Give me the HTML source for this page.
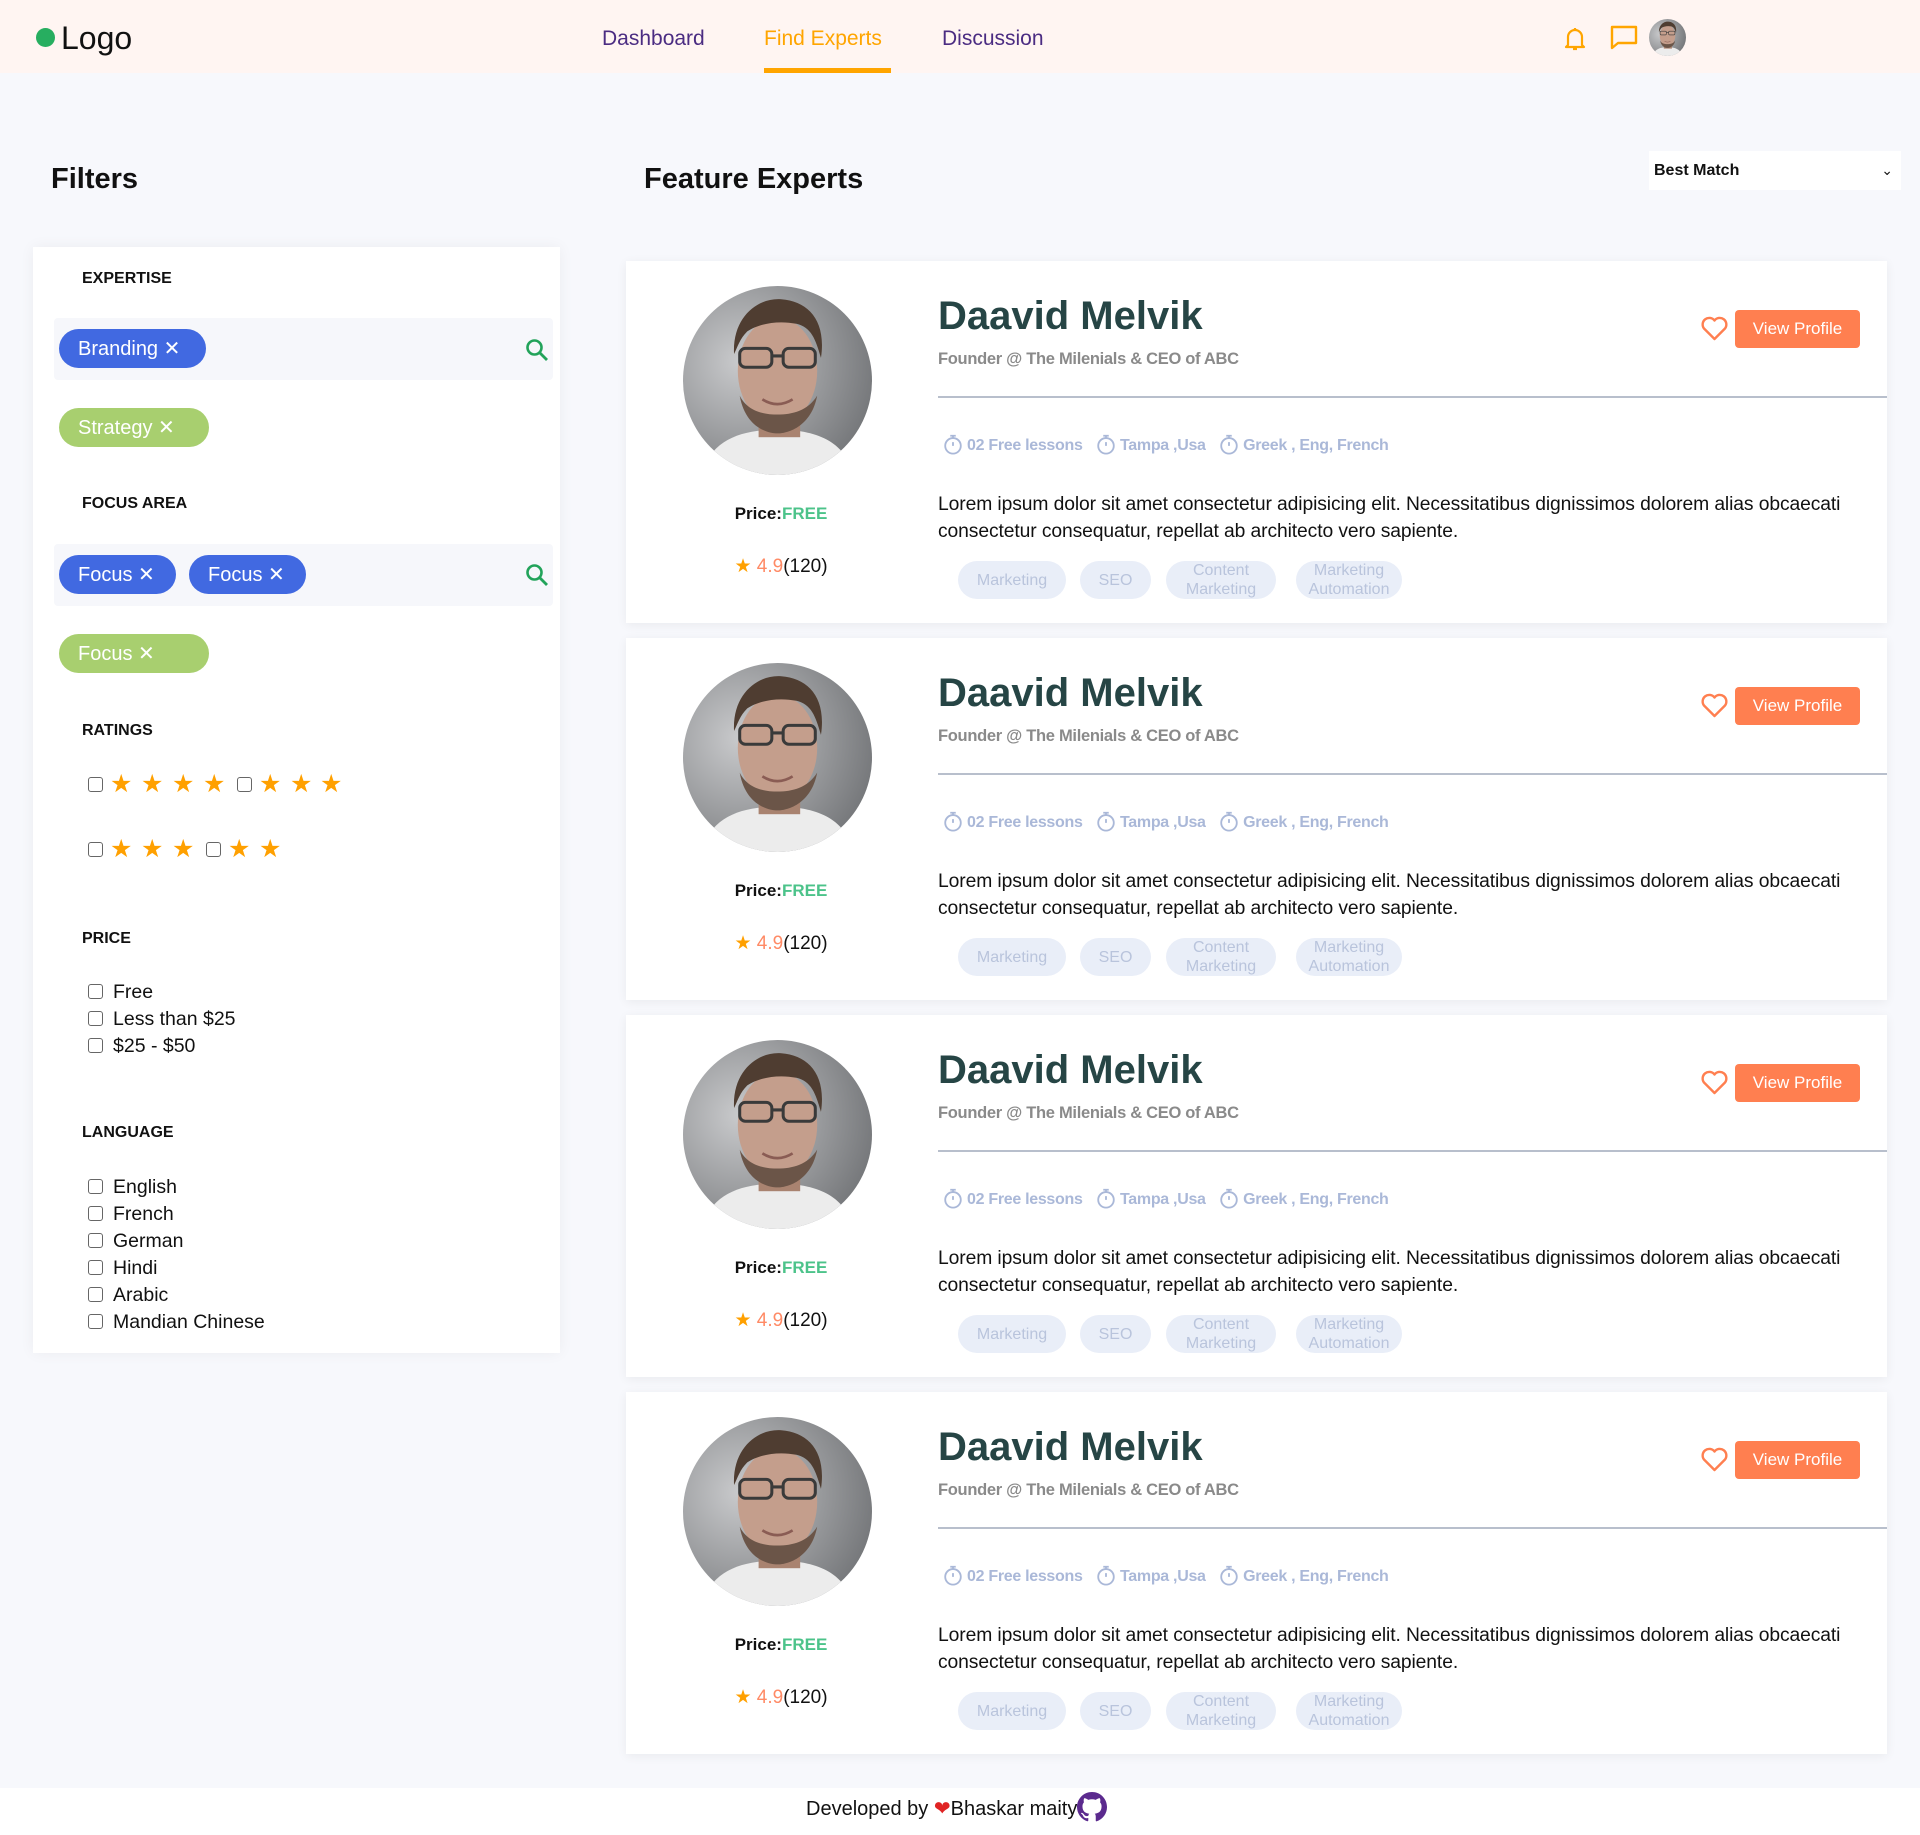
<!DOCTYPE html>
<html><head><meta charset="utf-8">
<style>
*{box-sizing:border-box;margin:0;padding:0}
body{width:1920px;height:1835px;background:#f7f8fc;font-family:"Liberation Sans",sans-serif;position:relative;overflow:hidden;color:#111}
.a{position:absolute}
.hdr{left:0;top:0;width:1920px;height:73px;background:#fff5f2}
.nav{font-size:21px;top:27px}
.h1{font-size:29px;font-weight:bold;top:163px}
.panel{left:33px;top:247px;width:527px;height:1106px;background:#fff;box-shadow:0 0 14px rgba(0,0,0,.05)}
.lbl{font-size:16px;font-weight:bold;left:82px}
.bar{left:54px;width:499px;height:62px;background:#f6f7fb;border-radius:4px}
.chip{height:39px;border-radius:20px;color:#fff;font-size:20px;line-height:41px;padding-left:19px}
.blue{background:#4169e1}.green{background:#a8cf6f}
.cb{width:15px;height:15px;border:1.5px solid #666;border-radius:3px;background:#fff}
.st{color:#ffa000;font-size:25px;line-height:25px}
.opt{font-size:19.5px;left:113px}
.card{left:626px;width:1261px;height:362px;background:#fff;box-shadow:0 2px 10px rgba(0,0,0,.06)}
.name{left:312px;top:33px;font-size:40px;font-weight:bold;color:#264545}
.sub{left:312px;top:89px;font-size:16.5px;font-weight:bold;color:#8a8a8a;letter-spacing:-.3px}
.hr{left:312px;top:135px;width:949px;height:2px;background:#b8bfcc}
.info{left:316px;top:172px;font-size:16px;font-weight:bold;color:#aab8d8;white-space:nowrap;letter-spacing:-.3px}
.desc{left:312px;top:230px;width:949px;font-size:19.3px;line-height:27px;color:#111;letter-spacing:-.1px}
.tag{top:300px;height:38px;border-radius:19px;background:#e9eef8;color:#b9c4dc;font-size:16px;text-align:center;display:flex;align-items:center;justify-content:center;line-height:19px}
.btn{left:1109px;top:49px;width:125px;height:38px;background:#ff7f50;border-radius:4px;color:#fff;font-size:17px;text-align:center;line-height:38px}
.price{left:90px;top:243px;width:130px;text-align:center;font-size:17px;font-weight:bold}
.rate{left:90px;top:294px;width:130px;text-align:center;font-size:19px}
.clock{display:inline-block;width:22px;height:22px;vertical-align:-5px;margin-right:3px}
</style></head><body>
<svg width="0" height="0" style="position:absolute">
<defs>
<clipPath id="cc"><circle cx="50" cy="50" r="50"/></clipPath>
<radialGradient id="bg" cx="30%" cy="40%" r="80%"><stop offset="0" stop-color="#c9cacc"/><stop offset="1" stop-color="#6e7073"/></radialGradient>
<symbol id="face" viewBox="0 0 100 100">
<g clip-path="url(#cc)">
<rect width="100" height="100" fill="url(#bg)"/>
<path d="M10 100 C14 82 30 76 50 76 C70 76 86 82 90 100Z" fill="#ececec"/>
<rect x="40" y="60" width="22" height="20" fill="#a98370"/>
<ellipse cx="50" cy="45" rx="21" ry="28" fill="#c49e8c"/>
<path d="M30 58 C33 75 45 78 50 78 C56 78 68 74 71 58 C66 66 58 68 50 68 C42 68 34 66 30 58Z" fill="#6b5548"/>
<path d="M27 36 C26 16 40 6 52 7 C66 8 76 18 73 38 C70 28 68 22 60 20 C50 18 40 20 34 24 C30 28 29 32 27 36Z" fill="#4f3d31"/>
<rect x="30" y="33" width="17" height="10" rx="3" fill="none" stroke="#3a3a3a" stroke-width="1.6"/>
<rect x="53" y="33" width="17" height="10" rx="3" fill="none" stroke="#3a3a3a" stroke-width="1.6"/>
<path d="M47 37 H53" stroke="#3a3a3a" stroke-width="1.6"/>
<path d="M42 60 Q50 65 58 60" stroke="#8a5c54" stroke-width="1.4" fill="none"/>
</g>
</symbol>
<symbol id="clk" viewBox="0 0 24 24"><circle cx="12" cy="14" r="8.5" fill="none" stroke="#aab8d8" stroke-width="2"/><path d="M9 3h6M12 3v2.5M12 10v4" stroke="#aab8d8" stroke-width="2" fill="none"/></symbol>
</defs></svg>

<div class="a hdr"></div>
<div class="a" style="left:36px;top:28px;width:19px;height:19px;border-radius:50%;background:#27ae60"></div>
<div class="a" style="left:61px;top:20px;font-size:32px;color:#111">Logo</div>
<div class="a nav" style="left:602px;color:#4b2c82">Dashboard</div>
<div class="a nav" style="left:764px;color:#ffa500">Find Experts</div>
<div class="a" style="left:764px;top:68px;width:127px;height:5px;background:#ffa500"></div>
<div class="a nav" style="left:942px;color:#4b2c82">Discussion</div>
<svg class="a" style="left:1563px;top:26px" width="24" height="26" viewBox="0 0 24 26"><path d="M5 19V11a7 7 0 0 1 14 0v8l2 2H3z" fill="none" stroke="#ffa500" stroke-width="2.2" stroke-linejoin="round"/><path d="M10 23h4" stroke="#ffa500" stroke-width="2.2"/><path d="M12 2v2" stroke="#ffa500" stroke-width="2.2"/></svg>
<svg class="a" style="left:1610px;top:25px" width="28" height="25" viewBox="0 0 28 25"><path d="M2 2h24v16H8l-6 5z" fill="none" stroke="#ffa500" stroke-width="2.4" stroke-linejoin="round"/></svg>
<svg class="a" style="left:1649px;top:19px" width="37" height="37"><use href="#face"/></svg>

<div class="a h1" style="left:51px">Filters</div>
<div class="a h1" style="left:644px">Feature Experts</div>
<div class="a" style="left:1649px;top:151px;width:252px;height:39px;background:#fff;font-size:16px;font-weight:bold;line-height:39px;padding-left:5px">Best Match<span style="position:absolute;right:8px;font-weight:normal;font-size:14px">&#8964;</span></div>

<div class="a panel"></div>
<div class="a lbl" style="top:270px">EXPERTISE</div>
<div class="a bar" style="top:318px"></div>
<div class="a chip blue" style="left:59px;top:329px;width:147px">Branding ✕</div>
<svg class="a" style="left:525px;top:338px" width="24" height="24" viewBox="0 0 24 24"><circle cx="9.5" cy="9.5" r="7" fill="none" stroke="#22a35a" stroke-width="2.6"/><path d="M14.5 14.5L22 22" stroke="#22a35a" stroke-width="2.8"/></svg>
<div class="a chip green" style="left:59px;top:408px;width:150px">Strategy ✕</div>
<div class="a lbl" style="top:495px">FOCUS AREA</div>
<div class="a bar" style="top:544px"></div>
<div class="a chip blue" style="left:59px;top:555px;width:117px">Focus ✕</div>
<div class="a chip blue" style="left:189px;top:555px;width:117px">Focus ✕</div>
<svg class="a" style="left:525px;top:563px" width="24" height="24" viewBox="0 0 24 24"><circle cx="9.5" cy="9.5" r="7" fill="none" stroke="#22a35a" stroke-width="2.6"/><path d="M14.5 14.5L22 22" stroke="#22a35a" stroke-width="2.8"/></svg>
<div class="a chip green" style="left:59px;top:634px;width:150px">Focus ✕</div>
<div class="a lbl" style="top:722px">RATINGS</div>
<div class="a cb" style="left:88px;top:777px"></div>
<div class="a st" style="left:110px;top:772px">★</div><div class="a st" style="left:141px;top:772px">★</div><div class="a st" style="left:172px;top:772px">★</div><div class="a st" style="left:203px;top:772px">★</div>
<div class="a cb" style="left:237px;top:777px"></div>
<div class="a st" style="left:259px;top:772px">★</div><div class="a st" style="left:290px;top:772px">★</div><div class="a st" style="left:320px;top:772px">★</div>
<div class="a cb" style="left:88px;top:842px"></div>
<div class="a st" style="left:110px;top:837px">★</div><div class="a st" style="left:141px;top:837px">★</div><div class="a st" style="left:172px;top:837px">★</div>
<div class="a cb" style="left:206px;top:842px"></div>
<div class="a st" style="left:228px;top:837px">★</div><div class="a st" style="left:259px;top:837px">★</div>
<div class="a lbl" style="top:930px">PRICE</div>
<div class="a cb" style="left:88px;top:984px"></div><div class="a opt" style="top:981px">Free</div>
<div class="a cb" style="left:88px;top:1011px"></div><div class="a opt" style="top:1008px">Less than $25</div>
<div class="a cb" style="left:88px;top:1038px"></div><div class="a opt" style="top:1035px">$25 - $50</div>
<div class="a lbl" style="top:1124px">LANGUAGE</div>
<div class="a cb" style="left:88px;top:1179px"></div><div class="a opt" style="top:1176px">English</div>
<div class="a cb" style="left:88px;top:1206px"></div><div class="a opt" style="top:1203px">French</div>
<div class="a cb" style="left:88px;top:1233px"></div><div class="a opt" style="top:1230px">German</div>
<div class="a cb" style="left:88px;top:1260px"></div><div class="a opt" style="top:1257px">Hindi</div>
<div class="a cb" style="left:88px;top:1287px"></div><div class="a opt" style="top:1284px">Arabic</div>
<div class="a cb" style="left:88px;top:1314px"></div><div class="a opt" style="top:1311px">Mandian Chinese</div>

<div class="a card" style="top:261px">
<svg class="a" style="left:57px;top:25px" width="189" height="189"><use href="#face"/></svg>
<div class="a price">Price:<span style="color:#4cc38a">FREE</span></div>
<div class="a rate"><span style="color:#ffa000">★</span> <span style="color:#ff8a65">4.9</span>(120)</div>
<div class="a name">Daavid Melvik</div>
<div class="a sub">Founder @ The Milenials &amp; CEO of ABC</div>
<svg class="a" style="left:1075px;top:55px" width="27" height="25" viewBox="0 0 27 25"><path d="M13.5 23L3 12.5A6 6 0 0 1 13.5 4.5A6 6 0 0 1 24 12.5z" fill="none" stroke="#ff7f50" stroke-width="2.4" stroke-linejoin="round"/></svg>
<div class="a btn">View Profile</div>
<div class="a hr"></div>
<div class="a info"><svg class="clock"><use href="#clk"/></svg>02 Free lessons &nbsp;&nbsp;<svg class="clock"><use href="#clk"/></svg>Tampa ,Usa &nbsp;&nbsp;<svg class="clock"><use href="#clk"/></svg>Greek , Eng, French</div>
<div class="a desc">Lorem ipsum dolor sit amet consectetur adipisicing elit. Necessitatibus dignissimos dolorem alias obcaecati consectetur consequatur, repellat ab architecto vero sapiente.</div>
<div class="a tag" style="left:332px;width:108px">Marketing</div>
<div class="a tag" style="left:454px;width:71px">SEO</div>
<div class="a tag" style="left:540px;width:110px">Content<br>Marketing</div>
<div class="a tag" style="left:670px;width:106px">Marketing<br>Automation</div>
</div>
<div class="a card" style="top:638px">
<svg class="a" style="left:57px;top:25px" width="189" height="189"><use href="#face"/></svg>
<div class="a price">Price:<span style="color:#4cc38a">FREE</span></div>
<div class="a rate"><span style="color:#ffa000">★</span> <span style="color:#ff8a65">4.9</span>(120)</div>
<div class="a name">Daavid Melvik</div>
<div class="a sub">Founder @ The Milenials &amp; CEO of ABC</div>
<svg class="a" style="left:1075px;top:55px" width="27" height="25" viewBox="0 0 27 25"><path d="M13.5 23L3 12.5A6 6 0 0 1 13.5 4.5A6 6 0 0 1 24 12.5z" fill="none" stroke="#ff7f50" stroke-width="2.4" stroke-linejoin="round"/></svg>
<div class="a btn">View Profile</div>
<div class="a hr"></div>
<div class="a info"><svg class="clock"><use href="#clk"/></svg>02 Free lessons &nbsp;&nbsp;<svg class="clock"><use href="#clk"/></svg>Tampa ,Usa &nbsp;&nbsp;<svg class="clock"><use href="#clk"/></svg>Greek , Eng, French</div>
<div class="a desc">Lorem ipsum dolor sit amet consectetur adipisicing elit. Necessitatibus dignissimos dolorem alias obcaecati consectetur consequatur, repellat ab architecto vero sapiente.</div>
<div class="a tag" style="left:332px;width:108px">Marketing</div>
<div class="a tag" style="left:454px;width:71px">SEO</div>
<div class="a tag" style="left:540px;width:110px">Content<br>Marketing</div>
<div class="a tag" style="left:670px;width:106px">Marketing<br>Automation</div>
</div>
<div class="a card" style="top:1015px">
<svg class="a" style="left:57px;top:25px" width="189" height="189"><use href="#face"/></svg>
<div class="a price">Price:<span style="color:#4cc38a">FREE</span></div>
<div class="a rate"><span style="color:#ffa000">★</span> <span style="color:#ff8a65">4.9</span>(120)</div>
<div class="a name">Daavid Melvik</div>
<div class="a sub">Founder @ The Milenials &amp; CEO of ABC</div>
<svg class="a" style="left:1075px;top:55px" width="27" height="25" viewBox="0 0 27 25"><path d="M13.5 23L3 12.5A6 6 0 0 1 13.5 4.5A6 6 0 0 1 24 12.5z" fill="none" stroke="#ff7f50" stroke-width="2.4" stroke-linejoin="round"/></svg>
<div class="a btn">View Profile</div>
<div class="a hr"></div>
<div class="a info"><svg class="clock"><use href="#clk"/></svg>02 Free lessons &nbsp;&nbsp;<svg class="clock"><use href="#clk"/></svg>Tampa ,Usa &nbsp;&nbsp;<svg class="clock"><use href="#clk"/></svg>Greek , Eng, French</div>
<div class="a desc">Lorem ipsum dolor sit amet consectetur adipisicing elit. Necessitatibus dignissimos dolorem alias obcaecati consectetur consequatur, repellat ab architecto vero sapiente.</div>
<div class="a tag" style="left:332px;width:108px">Marketing</div>
<div class="a tag" style="left:454px;width:71px">SEO</div>
<div class="a tag" style="left:540px;width:110px">Content<br>Marketing</div>
<div class="a tag" style="left:670px;width:106px">Marketing<br>Automation</div>
</div>
<div class="a card" style="top:1392px">
<svg class="a" style="left:57px;top:25px" width="189" height="189"><use href="#face"/></svg>
<div class="a price">Price:<span style="color:#4cc38a">FREE</span></div>
<div class="a rate"><span style="color:#ffa000">★</span> <span style="color:#ff8a65">4.9</span>(120)</div>
<div class="a name">Daavid Melvik</div>
<div class="a sub">Founder @ The Milenials &amp; CEO of ABC</div>
<svg class="a" style="left:1075px;top:55px" width="27" height="25" viewBox="0 0 27 25"><path d="M13.5 23L3 12.5A6 6 0 0 1 13.5 4.5A6 6 0 0 1 24 12.5z" fill="none" stroke="#ff7f50" stroke-width="2.4" stroke-linejoin="round"/></svg>
<div class="a btn">View Profile</div>
<div class="a hr"></div>
<div class="a info"><svg class="clock"><use href="#clk"/></svg>02 Free lessons &nbsp;&nbsp;<svg class="clock"><use href="#clk"/></svg>Tampa ,Usa &nbsp;&nbsp;<svg class="clock"><use href="#clk"/></svg>Greek , Eng, French</div>
<div class="a desc">Lorem ipsum dolor sit amet consectetur adipisicing elit. Necessitatibus dignissimos dolorem alias obcaecati consectetur consequatur, repellat ab architecto vero sapiente.</div>
<div class="a tag" style="left:332px;width:108px">Marketing</div>
<div class="a tag" style="left:454px;width:71px">SEO</div>
<div class="a tag" style="left:540px;width:110px">Content<br>Marketing</div>
<div class="a tag" style="left:670px;width:106px">Marketing<br>Automation</div>
</div>

<div class="a" style="left:0;top:1788px;width:1920px;height:47px;background:#fff"></div>
<div class="a" style="left:806px;top:1792px;font-size:20px;color:#111;white-space:nowrap">Developed by <span style="color:#e02424">&#10084;</span>Bhaskar maity<svg width="30" height="30" viewBox="0 0 16 16" style="vertical-align:-7px"><path fill="#5b2a8e" d="M8 0C3.58 0 0 3.58 0 8c0 3.540 2.29 6.53 5.47 7.59.4.07.55-.17.55-.38v-1.33c-2.23.48-2.7-1.070-2.7-1.070-.36-.92-.89-1.17-.89-1.17-.73-.5.06-.49.06-.49.8.06 1.23.83 1.23.83.72 1.22 1.87.87 2.33.66.07-.52.28-.87.5-1.07-1.78-.2-3.64-.89-3.64-3.95 0-.87.31-1.59.82-2.15-.08-.2-.36-1.02.08-2.12 0 0 .67-.21 2.2.82a7.6 7.6 0 0 1 4 0c1.53-1.04 2.2-.82 2.2-.82.44 1.1.16 1.92.08 2.12.51.56.82 1.27.82 2.15 0 3.07-1.87 3.75-3.65 3.95.29.25.54.73.54 1.48v2.2c0 .21.15.46.55.38A8.01 8.01 0 0 0 16 8c0-4.420-3.58-8-8-8z"/></svg></div>
</body></html>
